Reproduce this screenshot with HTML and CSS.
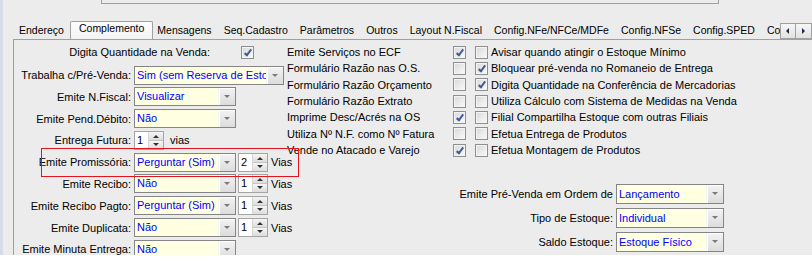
FILE: index.html
```html
<!DOCTYPE html>
<html lang="pt-BR">

<head>
  <meta charset="UTF-8">
  <meta name="viewport" content="width=device-width, initial-scale=1.0">
  <title>Cadastro - Complemento</title>
  <link rel="stylesheet" href="styles.css">
</head>

<body>
  <div class="window">
    <!-- painel de cima (cortado) -->
    <div class="topFrame"></div>

    <!-- abas -->
    <div class="tabs">
      <div class="tabList">
        <div class="tab">Endereço</div>
        <div class="tab active">Complemento</div>
        <div class="tab">Mensagens</div>
        <div class="tab">Seq.Cadastro</div>
        <div class="tab">Parâmetros</div>
        <div class="tab">Outros</div>
        <div class="tab">Layout N.Fiscal</div>
        <div class="tab">Config.NFe/NFCe/MDFe</div>
        <div class="tab">Config.NFSe</div>
        <div class="tab">Config.SPED</div>
        <div class="tab">Contábil</div>
      </div>
      <div class="tabScroll">
        <span class="scrollBtn left"></span>
        <span class="scrollBtn right"></span>
      </div>
    </div>

    <div class="page">
      <!-- coluna da esquerda -->
      <div class="colLeft">
        <div class="checkRow">
          <span class="checkLabel">Digita Quantidade na Venda:</span>
          <span class="chk on"></span>
        </div>

        <div class="formGrid">
          <label>Trabalha c/Pré-Venda:</label>
          <div class="ctrl">
            <div class="combo wide"><span class="value">Sim (sem Reserva de Estoque)</span><span class="drop"></span></div>
          </div>

          <label>Emite N.Fiscal:</label>
          <div class="ctrl">
            <div class="combo"><span class="value">Visualizar</span><span class="drop"></span></div>
          </div>

          <label>Emite Pend.Débito:</label>
          <div class="ctrl">
            <div class="combo"><span class="value">Não</span><span class="drop"></span></div>
          </div>

          <label>Entrega Futura:</label>
          <div class="ctrl">
            <div class="spin first"><span class="num">1</span><span class="arrows"><i class="up"></i><i class="down"></i></span></div>
            <span class="unit far">vias</span>
          </div>

          <label>Emite Promissória:</label>
          <div class="ctrl">
            <div class="combo"><span class="value">Perguntar (Sim)</span><span class="drop"></span></div>
            <div class="spin"><span class="num">2</span><span class="arrows"><i class="up"></i><i class="down"></i></span></div>
            <span class="unit">Vias</span>
          </div>

          <label>Emite Recibo:</label>
          <div class="ctrl">
            <div class="combo"><span class="value">Não</span><span class="drop"></span></div>
            <div class="spin"><span class="num">1</span><span class="arrows"><i class="up"></i><i class="down"></i></span></div>
            <span class="unit">Vias</span>
          </div>

          <label>Emite Recibo Pagto:</label>
          <div class="ctrl">
            <div class="combo"><span class="value">Perguntar (Sim)</span><span class="drop"></span></div>
            <div class="spin"><span class="num">1</span><span class="arrows"><i class="up"></i><i class="down"></i></span></div>
            <span class="unit">Vias</span>
          </div>

          <label>Emite Duplicata:</label>
          <div class="ctrl">
            <div class="combo"><span class="value">Não</span><span class="drop"></span></div>
            <div class="spin"><span class="num">1</span><span class="arrows"><i class="up"></i><i class="down"></i></span></div>
            <span class="unit">Vias</span>
          </div>

          <label>Emite Minuta Entrega:</label>
          <div class="ctrl">
            <div class="combo"><span class="value">Não</span><span class="drop"></span></div>
          </div>
        </div>
      </div>

      <!-- coluna da direita -->
      <div class="colRight">
        <div class="checkList">
          <span>Emite Serviços no ECF</span><span class="chk on"></span><span class="chk"></span><span>Avisar quando atingir o Estoque Mínimo</span>
          <span>Formulário Razão nas O.S.</span><span class="chk"></span><span class="chk on"></span><span>Bloquear pré-venda no Romaneio de Entrega</span>
          <span>Formulário Razão Orçamento</span><span class="chk"></span><span class="chk on"></span><span>Digita Quantidade na Conferência de Mercadorias</span>
          <span>Formulário Razão Extrato</span><span class="chk"></span><span class="chk"></span><span>Utiliza Cálculo com Sistema de Medidas na Venda</span>
          <span>Imprime Desc/Acrés na OS</span><span class="chk on"></span><span class="chk"></span><span>Filial Compartilha Estoque com outras Filiais</span>
          <span>Utiliza Nº N.F. como Nº Fatura</span><span class="chk"></span><span class="chk"></span><span>Efetua Entrega de Produtos</span>
          <span>Vende no Atacado e Varejo</span><span class="chk on"></span><span class="chk"></span><span>Efetua Montagem de Produtos</span>
        </div>

        <div class="orderForm">
          <label>Emite Pré-Venda em Ordem de</label>
          <div class="combo order"><span class="value">Lançamento</span><span class="drop"></span></div>
          <label>Tipo de Estoque:</label>
          <div class="combo order"><span class="value">Individual</span><span class="drop"></span></div>
          <label>Saldo Estoque:</label>
          <div class="combo order"><span class="value">Estoque Físico</span><span class="drop"></span></div>
        </div>
      </div>

      <!-- destaque vermelho -->
      <div class="highlight"></div>
    </div>
  </div>
</body>

</html>
```

FILE: styles.css
```css
html,
body {
  margin: 0;
  height: 258px;
  overflow: hidden;
  background-color: #ffffff;
}

body {
  font-family: 'Liberation Sans', Arial, sans-serif;
  font-size: 11px;
  color: #000000;
}

.window {
  height: 255px;
  overflow: hidden;
  background-color: #ececec;
  border-left: 3px solid #d5dbe9;
}

.topFrame {
  margin-left: 98px;
  width: 616px;
  height: 3px;
  border: 1px solid #a0a0a0;
  border-top: none;
}

/* abas */
.tabs {
  display: flex;
  margin-top: 17px;
  margin-left: 10px;
  height: 18px;
}

.tabList {
  display: flex;
  align-items: flex-end;
  flex: 1;
  overflow: hidden;
}

.tab {
  flex: none;
  height: 16px;
  line-height: 14px;
  padding: 0 6px;
  font-size: 10.5px;
  white-space: nowrap;
  box-sizing: border-box;
}

.tab.active {
  position: relative;
  z-index: 2;
  height: 19px;
  margin: 0 -2px -1px 0;
  padding: 0 8px;
  line-height: 13px;
  border: 1px solid #a0a0a0;
  border-bottom: none;
  border-radius: 2px 2px 0 0;
  background: linear-gradient(#fdfdfd, #f2f2f2);
}

.tabScroll {
  display: flex;
  flex: none;
  width: 32px;
  padding-top: 2px;
}

.scrollBtn {
  position: relative;
  width: 16px;
  height: 16px;
  box-sizing: border-box;
  border: 1px solid #a0a0a0;
  background: linear-gradient(#f6f6f6, #e2e2e2);
}

.scrollBtn + .scrollBtn {
  border-left: none;
}

.scrollBtn::after {
  content: "";
  position: absolute;
  top: 4px;
  border-top: 3px solid transparent;
  border-bottom: 3px solid transparent;
}

.scrollBtn.left::after {
  left: 5px;
  border-right: 3px solid #1a2a4a;
}

.scrollBtn.right::after {
  left: 6px;
  border-left: 3px solid #1a2a4a;
}

/* pagina */
.page {
  position: relative;
  display: flex;
  margin-left: 10px;
  padding-top: 4px;
  height: 300px;
  border-top: 1px solid #a0a0a0;
  border-left: 1px solid #a0a0a0;
}

.colLeft {
  flex: none;
  width: 273px;
}

.colRight {
  flex: 1;
}

.checkRow {
  display: flex;
  align-items: center;
  height: 16px;
  margin-bottom: 5.5px;
}

.checkLabel {
  width: 196px;
  text-align: right;
  margin-right: 31px;
}

.formGrid {
  display: grid;
  grid-template-columns: 117px auto;
  grid-auto-rows: 19px;
  column-gap: 3px;
  row-gap: 2.8px;
  align-items: center;
}

.formGrid label,
.orderForm label {
  text-align: right;
  white-space: nowrap;
}

.ctrl {
  display: flex;
  align-items: center;
  white-space: nowrap;
}

/* combo */
.combo {
  display: flex;
  flex: none;
  width: 102px;
  height: 19px;
  box-sizing: border-box;
  border: 1px solid #858585;
  background-color: #ffffe1;
}

.combo.wide {
  width: 150px;
}

.combo.order {
  width: 108px;
  height: 20px;
}

.combo .value {
  flex: 1;
  overflow: hidden;
  padding-left: 2px;
  line-height: 17px;
  color: #0000ff;
  white-space: nowrap;
}

.combo.order .value {
  line-height: 18px;
}

.combo .drop {
  position: relative;
  flex: none;
  width: 16px;
  border-left: 1px solid #f4f4f4;
  box-shadow: inset 1px 1px 0 #ffffff;
  background: linear-gradient(#f3f3f3, #dcdcdc);
}

.combo .drop::after {
  content: "";
  position: absolute;
  left: 5px;
  top: 7px;
  border-left: 3px solid transparent;
  border-right: 3px solid transparent;
  border-top: 3px solid #7a7a7a;
}

/* spin */
.spin {
  display: flex;
  flex: none;
  width: 30px;
  height: 19px;
  margin-left: 2px;
  box-sizing: border-box;
  border: 1px solid #a5a5a5;
  background-color: #ffffff;
}

.spin.first {
  margin-left: 0;
}

.spin .num {
  flex: 1;
  padding-left: 2px;
  line-height: 17px;
}

.spin .arrows {
  display: flex;
  flex-direction: column;
  width: 14px;
  border-left: 1px solid #d6d6d6;
}

.spin i {
  position: relative;
  flex: 1;
  background: linear-gradient(#f5f5f5, #dddddd);
  border-bottom: 1px solid #c4c4c4;
}

.spin i.down {
  border-bottom: none;
}

.spin i::after {
  content: "";
  position: absolute;
  left: 4px;
  top: 3px;
  border-left: 3px solid transparent;
  border-right: 3px solid transparent;
}

.spin i.up::after {
  border-bottom: 3px solid #333333;
}

.spin i.down::after {
  top: 2px;
  border-top: 3px solid #333333;
}

.unit {
  margin-left: 3px;
}

.unit.far {
  margin-left: 6px;
}

/* checkbox */
.chk {
  position: relative;
  display: inline-block;
  width: 13px;
  height: 13px;
  box-sizing: border-box;
  border: 1px solid #8f8f8f;
  box-shadow: inset 0 0 0 1px #f4f4f4;
  background: linear-gradient(135deg, #d8d8d8, #fafafa);
}

.chk.on::after {
  content: "";
  position: absolute;
  left: 4px;
  top: 1px;
  width: 2px;
  height: 6px;
  border: solid #3f5d96;
  border-width: 0 2px 2px 0;
  transform: rotate(38deg);
}

.checkList {
  display: grid;
  grid-template-columns: 166px 22px 16px auto;
  grid-auto-rows: 16.33px;
  align-items: center;
  white-space: nowrap;
}

.orderForm {
  display: grid;
  grid-template-columns: 326px 108px;
  grid-auto-rows: 20px;
  column-gap: 3px;
  row-gap: 4px;
  align-items: center;
  margin-top: 26px;
}

.highlight {
  position: absolute;
  left: 27px;
  top: 108px;
  width: 258px;
  height: 29px;
  box-sizing: border-box;
  border: 1px solid #e3141c;
}
```
